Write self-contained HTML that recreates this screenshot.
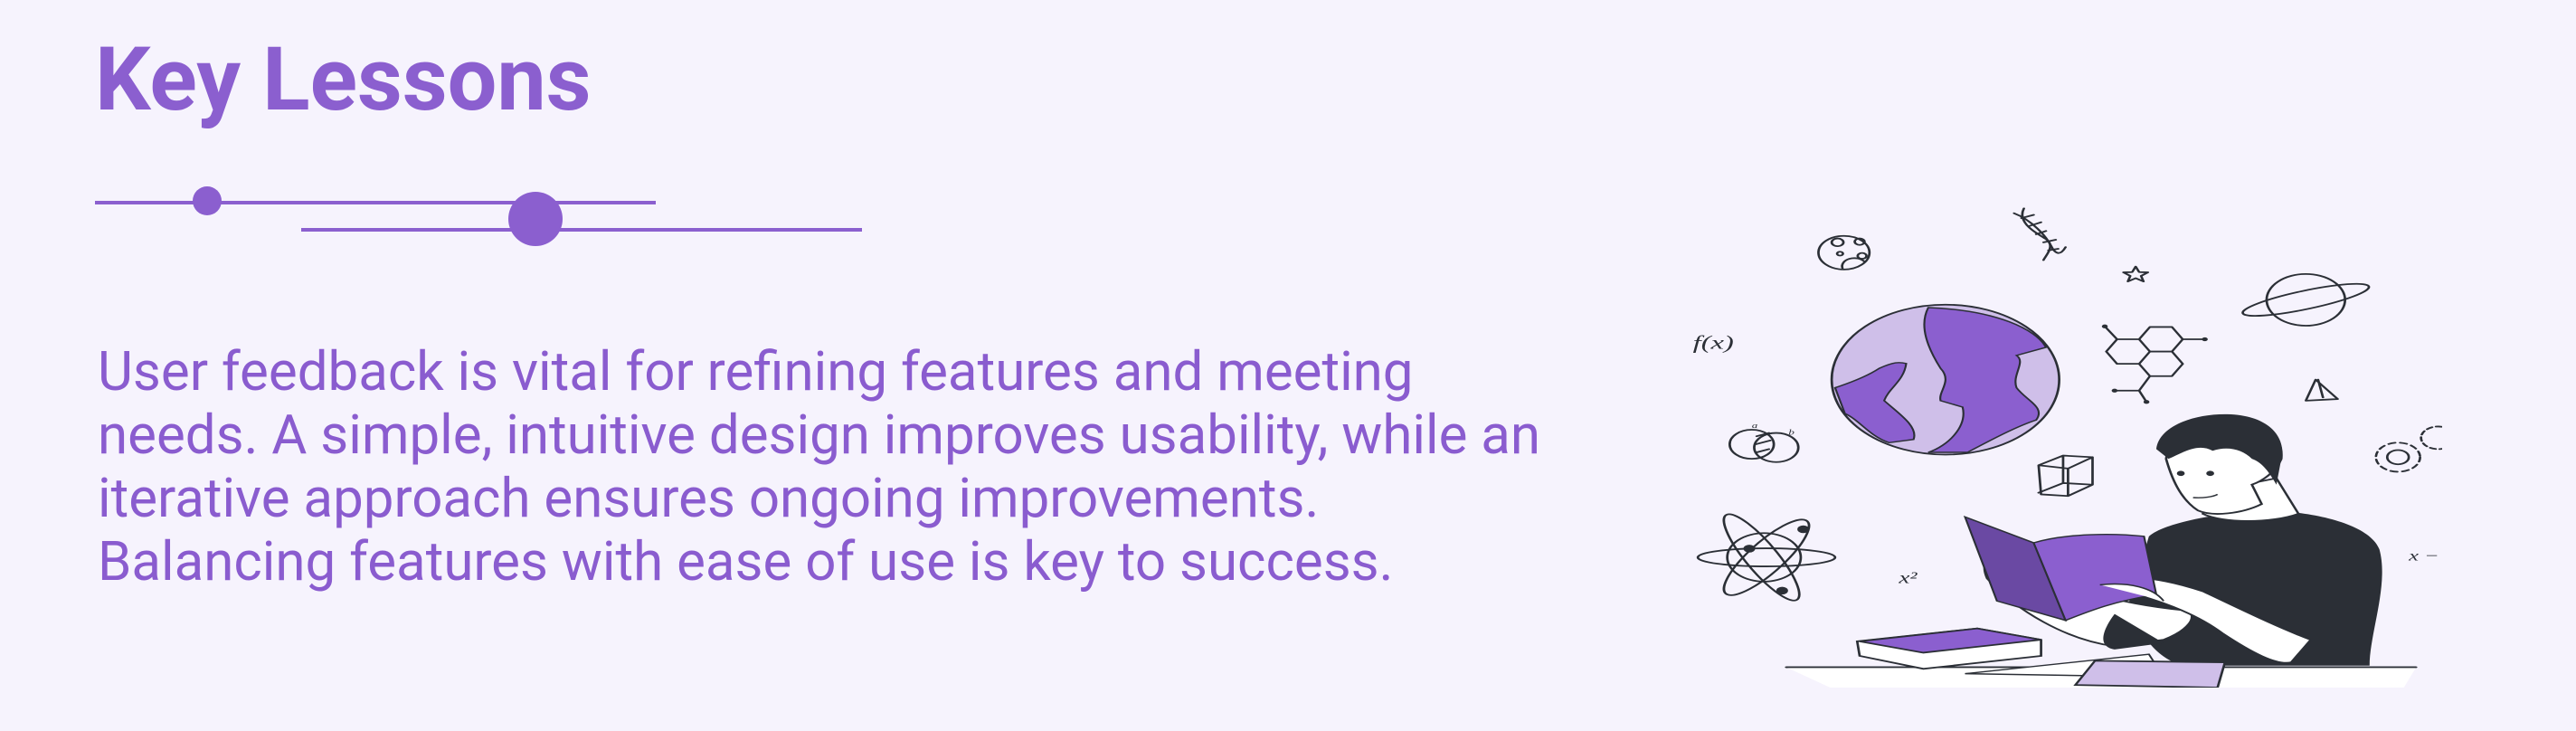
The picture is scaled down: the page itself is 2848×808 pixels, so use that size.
<!DOCTYPE html>
<html><head><meta charset="utf-8"><style>
html,body{margin:0;padding:0}
body{width:2848px;height:808px;background:#f6f3fd;position:relative;overflow:hidden;font-family:"Roboto","Liberation Sans",sans-serif}
h1{position:absolute;left:105px;top:30px;margin:0;font-size:97px;font-weight:bold;color:#8b5fcf;line-height:116px;letter-spacing:0}
.p{position:absolute;left:108px;top:376px;font-size:60px;line-height:70px;color:#8a5ccf;white-space:nowrap;letter-spacing:0}
.ln{position:absolute;height:4px;background:#8b5fcf}
.dot{position:absolute;border-radius:50%;background:#8b5fcf}
svg{position:absolute}
</style></head><body>
<h1>Key Lessons</h1>
<div class="ln" style="left:105px;top:222px;width:620px"></div>
<div class="ln" style="left:333px;top:252px;width:620px"></div>
<div class="dot" style="left:213px;top:206px;width:32px;height:32px"></div>
<div class="dot" style="left:562px;top:212px;width:60px;height:60px"></div>
<div class="p">User feedback is vital for refining features and meeting<br>needs. A simple, intuitive design improves usability, while an<br>iterative approach ensures ongoing improvements.<br>Balancing features with ease of use is key to success.</div>

<svg style="left:1850px;top:200px" width="850" height="560" viewBox="0 0 1568 1568" preserveAspectRatio="none">
<g fill="none" stroke="#2b2f36" stroke-width="5" stroke-linecap="round" stroke-linejoin="round">
<circle cx="348" cy="222" r="52"/><circle cx="335" cy="190" r="12"/><circle cx="380" cy="188" r="10"/><circle cx="340" cy="225" r="6"/><path d="M345 270 a25 25 0 0 1 45 -20"/><circle cx="385" cy="232" r="9"/>
<path d="M695 100 C730 120,760 170,770 200 S790 230,800 205"/><path d="M715 85 C700 130,740 160,760 180 S760 230,755 245"/>
<path d="M710 115 l25 -10 M725 140 l25 -12 M740 165 l20 -10 M755 190 l25 -8 M765 215 l20 -5"/>
<path d="M943 265 l7 17 18 1 -14 11 5 17 -16 -10 -16 10 5 -17 -14 -11 18 -1z"/>
<circle cx="1290" cy="368" r="80"/><ellipse cx="1290" cy="368" rx="135" ry="28" transform="rotate(-18 1290 368)"/>
<path d="M905 490 l45 0 22 38 -22 38 -45 0 -22 -38z M950 490 l22 -38 45 0 22 38 -22 38 -45 0z M972 528 l45 0 22 38 -22 38 -45 0 -22 -38z M905 490 l-25 -40 M1039 490 l45 0 M972 604 l-22 45 -50 0 M950 649 l15 35"/>
<path d="M1310 615 l45 60 -65 5z M1315 615 l10 55"/>
<circle cx="160" cy="815" r="45"/><circle cx="210" cy="825" r="45"/><path d="M170 790 l25 -10 M168 815 l30 -12 M170 840 l25 -10"/>
<circle cx="1478" cy="855" r="22"/><circle cx="1478" cy="855" r="45" stroke-dasharray="14 10"/><circle cx="1560" cy="795" r="35" stroke-dasharray="12 8"/>
<path d="M745 880 l50 -30 60 5 0 85 -50 35 -55 -5z M745 880 l60 10 50 -35 M805 890 l0 85 M745 965 l50 -30 60 5 M795 850 l0 85"/>
<circle cx="185" cy="1165" r="75"/><ellipse cx="190" cy="1165" rx="140" ry="28"/><ellipse cx="180" cy="1165" rx="150" ry="35" transform="rotate(62 180 1165)"/><ellipse cx="190" cy="1165" rx="140" ry="40" transform="rotate(-55 190 1165)"/>
<path d="M230 1505 L1515 1505"/>
</g>
<g fill="#2b2f36"><circle cx="155" cy="1138" r="12"/><circle cx="265" cy="1078" r="12"/><circle cx="222" cy="1268" r="12"/><circle cx="880" cy="450" r="6"/><circle cx="1084" cy="490" r="6"/><circle cx="900" cy="649" r="6"/><circle cx="965" cy="684" r="6"/></g>
<g font-family="Liberation Serif,serif" font-style="italic" fill="#2b2f36" font-size="60">
<text x="40" y="520">f(x)</text><text x="460" y="1245" font-size="50">x²</text><text x="1500" y="1175" font-size="45">x − y</text><text x="160" y="765" font-size="24">a</text><text x="235" y="785" font-size="24">b</text></g>
<circle cx="555" cy="615" r="232" fill="#cfbfe9" stroke="#2b2f36" stroke-width="5"/>
<path d="M520 392 C500 450,520 520,545 580 C570 620,540 650,545 680 L590 700 C600 760,560 820,520 840 L600 840 C650 800,700 760,740 740 C760 700,720 680,700 640 C690 600,720 560,700 540 L760 515 C740 460,660 400,520 392Z" fill="#8b5fcf" stroke="#2b2f36" stroke-width="4"/>
<path d="M330 640 C370 620,400 600,420 580 C450 560,460 560,475 565 C470 620,440 640,430 680 C460 720,500 760,490 800 L440 810 C400 790,380 740,350 720 Z" fill="#8b5fcf" stroke="#2b2f36" stroke-width="4"/>
<path d="M230 1505 L1515 1505 L1490 1568 L320 1568Z" fill="#ffffff"/>
<path d="M230 1505 L1515 1505" stroke="#2b2f36" stroke-width="5"/>
<path d="M375 1425 L620 1385 L750 1420 L750 1470 L510 1510 L380 1470Z" fill="#ffffff" stroke="#2b2f36" stroke-width="5"/>
<path d="M380 1425 L620 1385 L750 1420 L510 1460Z" fill="#8b5fcf" stroke="#2b2f36" stroke-width="5"/>
<path d="M595 1525 L970 1465 L1000 1535 Z" fill="#fff" stroke="#2b2f36" stroke-width="4"/>
<path d="M970 1100 C1000 1060,1100 1030,1200 1020 C1300 1020,1420 1060,1440 1140 C1460 1250,1420 1400,1420 1500 L1050 1500 C1000 1500,940 1400,930 1300 Z" fill="#2b2f36"/>
<path d="M1080 1030 C1120 1060,1220 1060,1275 1030 L1230 920 L1100 960Z" fill="#fff" stroke="#2b2f36" stroke-width="5"/>
<path d="M1005 860 C1010 800,1060 740,1120 730 C1200 725,1245 780,1240 860 C1230 900,1200 930,1180 940 L1200 1000 C1160 1030,1100 1040,1070 1020 C1040 990,1020 940,1005 860Z" fill="#fff" stroke="#2b2f36" stroke-width="5"/>
<path d="M985 830 C990 760,1060 720,1130 722 C1220 725,1250 800,1240 860 L1230 940 C1215 900,1200 870,1180 860 C1160 830,1130 820,1100 835 C1070 810,1040 840,1010 860 Z" fill="#2b2f36"/>
<circle cx="1035" cy="905" r="8" fill="#2b2f36"/><circle cx="1095" cy="905" r="8" fill="#2b2f36"/>
<path d="M1060 980 C1080 982,1100 978,1110 970" stroke="#2b2f36" stroke-width="4" fill="none"/>
<path d="M640 1230 C700 1330,800 1420,900 1440 L1000 1420 C1050 1390,1070 1350,1050 1330 C980 1320,900 1300,850 1270 L700 1160 C660 1140,620 1160,640 1230Z" fill="#fff" stroke="#2b2f36" stroke-width="5"/>
<path d="M900 1340 L1000 1430 L900 1450 C860 1440,880 1380,900 1340Z" fill="#2b2f36"/>
<path d="M870 1250 C950 1280,1050 1320,1120 1400 C1180 1460,1230 1500,1260 1490 L1300 1420 C1230 1380,1150 1320,1080 1270 C1000 1230,940 1220,880 1230Z" fill="#fff" stroke="#2b2f36" stroke-width="5"/>
<path d="M595 1040 L735 1120 L800 1360 L660 1300Z" fill="#6a49a3" stroke="#2b2f36" stroke-width="4"/>
<path d="M735 1120 C800 1090,900 1090,960 1100 L985 1280 C900 1300,850 1330,800 1360Z" fill="#8b5fcf" stroke="#2b2f36" stroke-width="4"/>
<path d="M870 1250 C930 1240,980 1260,1000 1300" stroke="#2b2f36" stroke-width="4" fill="#fff"/>
<path d="M860 1485 L1125 1490 L1110 1568 L820 1560Z" fill="#cfbfe9" stroke="#2b2f36" stroke-width="5"/>
</svg>
</body></html>
